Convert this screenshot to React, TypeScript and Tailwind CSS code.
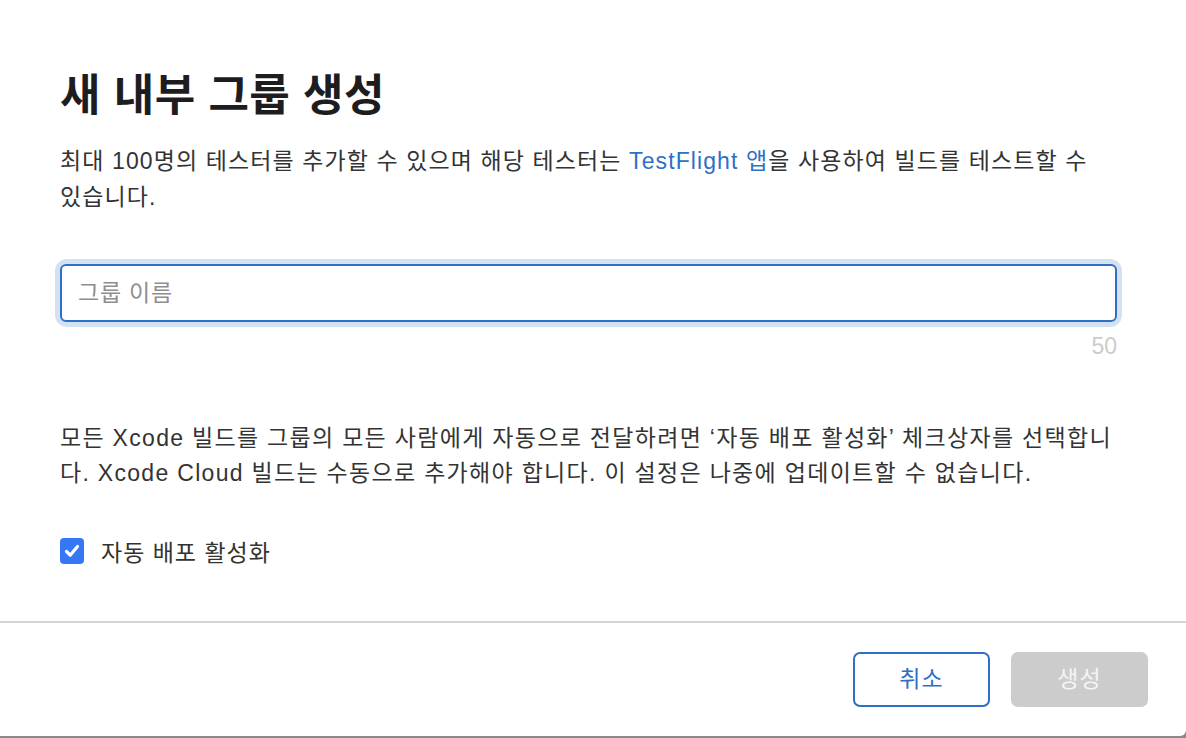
import React from "react";

const font = { fontFamily: '"Liberation Sans", "Noto Sans CJK KR", sans-serif' };

export default function App() {
  return (
    <div className="w-[1186px] h-[738px] bg-[#8a8a8a] overflow-hidden" style={font}>
      <div className="h-[736px] bg-white rounded-br-[6px] flex flex-col">
        <div className="flex-1 pl-[60px] pr-[38px] pt-[70px]">
          <h1 className="text-[44px] leading-[52px] font-bold text-[#1d1d1f] tracking-[0.5px]">
            새 내부 그룹 생성
          </h1>
          <p className="mt-[21px] text-[23px] leading-[36px] tracking-[1.1px] text-[#333333] whitespace-nowrap">
            최대 100명의 테스터를 추가할 수 있으며 해당 테스터는{" "}
            <a className="text-[#2f6fc6]">TestFlight 앱</a>을 사용하여 빌드를 테스트할 수
            <br />
            있습니다.
          </p>

          <div className="mt-[49px] w-[1057px]">
            <div className="rounded-[7px] ring-[5px] ring-[#d4e1f3]">
              <input
                placeholder="그룹 이름"
                className="w-full h-[58px] rounded-[6px] border-2 border-[#2f6fc6] px-[16px] text-[23px] tracking-[0.8px] text-[#333] placeholder:text-[#8e8e8e] outline-none"
                style={font}
              />
            </div>
            <div className="mt-[11px] text-right text-[23px] leading-[26px] text-[#cccccc]">50</div>
          </div>

          <p className="mt-[62px] text-[23px] leading-[35px] tracking-[1.3px] text-[#333333] whitespace-nowrap">
            모든 Xcode 빌드를 그룹의 모든 사람에게 자동으로 전달하려면 ‘자동 배포 활성화’ 체크상자를 선택합니
            <br />
            다. Xcode Cloud 빌드는 수동으로 추가해야 합니다. 이 설정은 나중에 업데이트할 수 없습니다.
          </p>

          <label className="mt-[46px] flex items-center gap-[17px] h-[28px]">
            <span className="w-[24px] h-[26px] rounded-[4px] bg-[#3478f6] flex items-center justify-center">
              <svg width="18" height="18" viewBox="0 0 18 18" fill="none">
                <path d="M3.5 9.5 L7.2 13.2 L14.5 4.5" stroke="white" strokeWidth="3.2" strokeLinecap="round" strokeLinejoin="round" />
              </svg>
            </span>
            <span className="text-[23px] tracking-[1px] text-[#333333] leading-[28px] pt-[4px]">자동 배포 활성화</span>
          </label>
        </div>

        <div className="h-[2px] bg-[#d4d4d4]" />

        <div className="flex justify-end gap-[21px] pr-[38px] pt-[29px] pb-[29px]">
          <button className="w-[137px] h-[55px] rounded-[7px] border-2 border-[#2f6fc6] text-[#2f6fc6] text-[23px] tracking-[1px]" style={font}>
            취소
          </button>
          <button className="w-[137px] h-[55px] rounded-[7px] bg-[#cccccc] text-[#f4f4f4] text-[23px] tracking-[1px]" style={font}>
            생성
          </button>
        </div>
      </div>
    </div>
  );
}
